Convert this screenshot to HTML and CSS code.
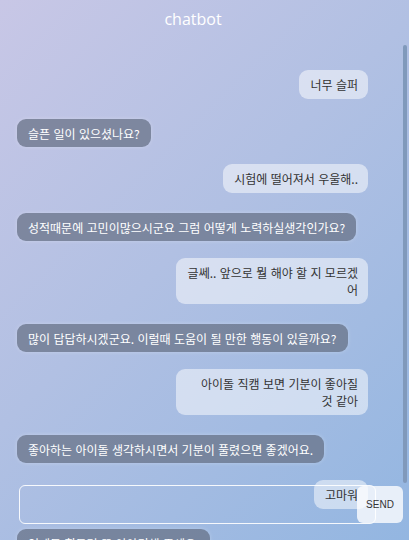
FILE: index.html
```html
<!DOCTYPE html>
<html lang="ko">
<head>
<meta charset="utf-8">
<title>chatbot</title>
<link rel="stylesheet" href="styles.css">
</head>
<body>
<div class="app">
  <header class="title">chatbot</header>
  <main class="chat">
    <div class="msg user">너무 슬퍼</div>
    <div class="msg bot">슬픈 일이 있으셨나요?</div>
    <div class="msg user">시험에 떨어져서 우울해..</div>
    <div class="msg bot">성적때문에 고민이많으시군요 그럼 어떻게 노력하실생각인가요?</div>
    <div class="msg user">글쎄.. 앞으로 뭘 해야 할 지 모르겠어</div>
    <div class="msg bot">많이 답답하시겠군요. 이럴때 도움이 될 만한 행동이 있을까요?</div>
    <div class="msg user">아이돌 직캠 보면 기분이 좋아질 것 같아</div>
    <div class="msg bot">좋아하는 아이돌 생각하시면서 기분이 풀렸으면 좋겠어요.</div>
    <div class="msg user">고마워</div>
    <div class="msg bot">언제든 힘들면 또 이야기해 주세요.</div>
  </main>
  <div class="scroll-thumb" aria-hidden="true"></div>
  <form class="composer" onsubmit="return false">
    <input class="composer-input" type="text" aria-label="메시지">
    <button class="composer-send" type="button">SEND</button>
  </form>
</div>
</body>
</html>
```

FILE: styles.css
```css
html, body {
  margin: 0;
  padding: 0;
  height: 540px;
  overflow: hidden;
}

body {
  background: linear-gradient(135deg, #c8c7e6 0%, #b1c0e3 45%, #93b6e1 100%);
  font-family: "Noto Sans CJK KR", "Noto Sans", sans-serif;
}

.app {
  position: relative;
  height: 540px;
  display: flex;
  flex-direction: column;
}

.title {
  height: 45px;
  box-sizing: border-box;
  padding: 8px 23px 0 0;
  text-align: center;
  color: #ffffff;
  font-family: "Open Sans", "Noto Sans", sans-serif;
  font-size: 16px;
  line-height: 22px;
}

.chat {
  flex: 1;
  overflow: hidden;
  display: flex;
  flex-direction: column;
  padding: 25px 41px 4px 17px;
}

.scroll-thumb {
  position: absolute;
  top: 45px;
  right: 2px;
  width: 4px;
  height: 438px;
  border-radius: 2px;
  background: #8099bb;
}

.msg {
  flex: none;
  font-size: 12px;
  line-height: 17px;
  border-radius: 9px;
  word-break: break-all;
}

.user {
  align-self: flex-end;
  max-width: 171px;
  padding: 6px 10px 6px 11px;
  margin-bottom: 20px;
  text-align: right;
  color: #333333;
  background: rgba(255, 255, 255, 0.5);
}

.bot {
  align-self: flex-start;
  padding: 5.5px 11px;
  margin-bottom: 17px;
  color: #ffffff;
  background: rgba(100, 110, 130, 0.7);
  box-shadow: 0 0 4px rgba(255, 255, 255, 0.25);
}

.composer {
  position: absolute;
  left: 19px;
  top: 485px;
  display: flex;
  align-items: center;
  margin: 0;
}

.composer-input {
  width: 357px;
  height: 39px;
  box-sizing: border-box;
  border: 1px solid rgba(255, 255, 255, 0.9);
  border-radius: 6px;
  background: transparent;
  outline: none;
}

.composer-send {
  margin-left: -19px;
  width: 46px;
  height: 37px;
  border: none;
  border-radius: 6px;
  background: rgba(255, 255, 255, 0.78);
  color: #333333;
  font-family: "Liberation Sans", Arial, sans-serif;
  font-size: 10px;
  padding: 0;
}
```
